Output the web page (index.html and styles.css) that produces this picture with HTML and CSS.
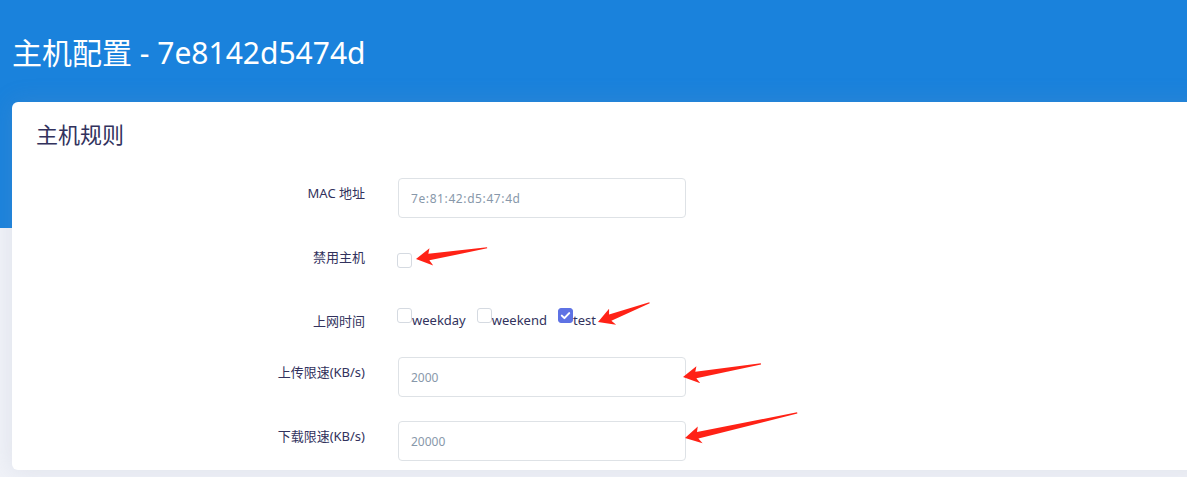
FILE: index.html
```html
<!DOCTYPE html>
<html lang="zh-CN">
<head>
<meta charset="UTF-8" />
<meta name="viewport" content="width=device-width, initial-scale=1" />
<title>主机配置</title>
<link rel="stylesheet" href="styles.css">
</head>
<body>
  <header class="top">
    <h1 class="page-title">主机配置 - 7e8142d5474d</h1>
  </header>

  <main class="card">
    <h2 class="card-title">主机规则</h2>
    <form class="rules">
      <div class="row">
        <label class="row-label">MAC 地址</label>
        <input class="field field-mac" type="text" placeholder="7e:81:42:d5:47:4d">
      </div>

      <div class="row row-switch">
        <label class="row-label">禁用主机</label>
        <div class="checks">
          <span class="box"></span>
        </div>
      </div>

      <div class="row row-times">
        <label class="row-label">上网时间</label>
        <div class="checks">
          <span class="check"><span class="box"></span><span class="check-text">weekday</span></span>
          <span class="check"><span class="box"></span><span class="check-text">weekend</span></span>
          <span class="check"><span class="box is-on"><svg viewBox="0 0 15 15" width="15" height="15"><path d="M3.8 7.6l2.6 2.5 4.8-5" fill="none" stroke="#fff" stroke-width="2" stroke-linecap="round" stroke-linejoin="round"/></svg></span><span class="check-text">test</span></span>
        </div>
      </div>

      <div class="row">
        <label class="row-label">上传限速(KB/s)</label>
        <input class="field" type="text" placeholder="2000">
      </div>

      <div class="row row-last">
        <label class="row-label">下载限速(KB/s)</label>
        <input class="field" type="text" placeholder="20000">
      </div>
    </form>
  </main>

  <!-- red annotation arrows drawn over the form -->
  <svg class="notes" width="1187" height="477" viewBox="0 0 1187 477" aria-hidden="true">
    <g fill="#ff2216">
      <path transform="translate(416 259) rotate(-9)" d="M0 0L15 -8.5L13 -3.2L72 -0.6L72 0.6L13 3.4L16 9Z"/>
      <path transform="translate(598 322) rotate(-20.5)" d="M0 0L15 -8.5L13 -3.2L55 -0.6L55 0.6L13 3.4L16 9Z"/>
      <path transform="translate(683 377) rotate(-9.5)" d="M0 0L15 -8.5L13 -3.2L79 -0.6L79 0.6L13 3.4L16 9Z"/>
      <path transform="translate(685 438) rotate(-12.6)" d="M0 0L15 -8.5L13 -3.2L115 -0.6L115 0.6L13 3.4L16 9Z"/>
    </g>
  </svg>
</body>
</html>
```

FILE: styles.css
```css
:root {
  --brand: #1a82dc;
  --page-bg: #f0f2f8;
  --ink: #32325d;
  --muted: #8898aa;
  --line: #dee2e6;
  --primary: #5e72e4;
  --font: "Noto Sans", "Noto Sans CJK SC", sans-serif;
}
* {
  box-sizing: border-box;
}
html, body {
  margin: 0;
  padding: 0;
}
body {
  position: relative;
  min-height: 100vh;
  overflow: hidden;
  font-family: var(--font);
  color: var(--ink);
  background: linear-gradient(to bottom, var(--brand) 0, var(--brand) 228px, var(--page-bg) 228px);
}
.page-title {
  margin: 0;
  padding: 33px 12px 29px;
  font-size: 30px;
  line-height: 40px;
  font-weight: 400;
  color: #fff;
}
.card {
  margin: 0 -20px 0 12px;
  padding: 17px 24px 9px;
  background: #fff;
  border-radius: 6px;
  box-shadow: 0 0 24px rgba(136, 152, 170, 0.18);
}
.card-title {
  margin: 0 0 29px;
  font-size: 22px;
  line-height: 30px;
  font-weight: 400;
  color: var(--ink);
}
.row {
  display: grid;
  grid-template-columns: 329px 288px;
  column-gap: 33px;
  align-items: start;
  margin-bottom: 24px;
}
.row-last {
  margin-bottom: 0;
}
.row-switch {
  min-height: 40px;
}
.row-times {
  margin-bottom: 21px;
}
.row-label {
  text-align: right;
  font-size: 13px;
  line-height: 30px;
  color: var(--ink);
}
.field {
  height: 40px;
  width: 100%;
  padding: 0 12px;
  border: 1px solid var(--line);
  border-radius: 4px;
  background: #fff;
  font-family: var(--font);
  font-size: 12px;
  color: var(--ink);
  outline: none;
}
.field::placeholder {
  color: var(--muted);
}
.field-mac::placeholder {
  letter-spacing: 0.6px;
}
.checks {
  display: flex;
  align-items: flex-start;
  gap: 11px;
  margin-left: -1px;
}
.row-switch .box {
  margin-top: 11px;
}
.check {
  display: flex;
  align-items: flex-start;
}
.check .box {
  margin-top: 2px;
}
.check-text {
  font-size: 13px;
  line-height: 28px;
  color: var(--ink);
}
.box {
  display: inline-block;
  width: 15px;
  height: 15px;
  border: 1px solid #d5dae1;
  border-radius: 3px;
  background: #fff;
}
.box.is-on {
  border-color: var(--primary);
  background: var(--primary);
}
.box svg {
  display: block;
  margin: -1px;
}
/* annotation overlay */
.notes {
  position: absolute;
  top: 0;
  left: 0;
  pointer-events: none;
}
```
